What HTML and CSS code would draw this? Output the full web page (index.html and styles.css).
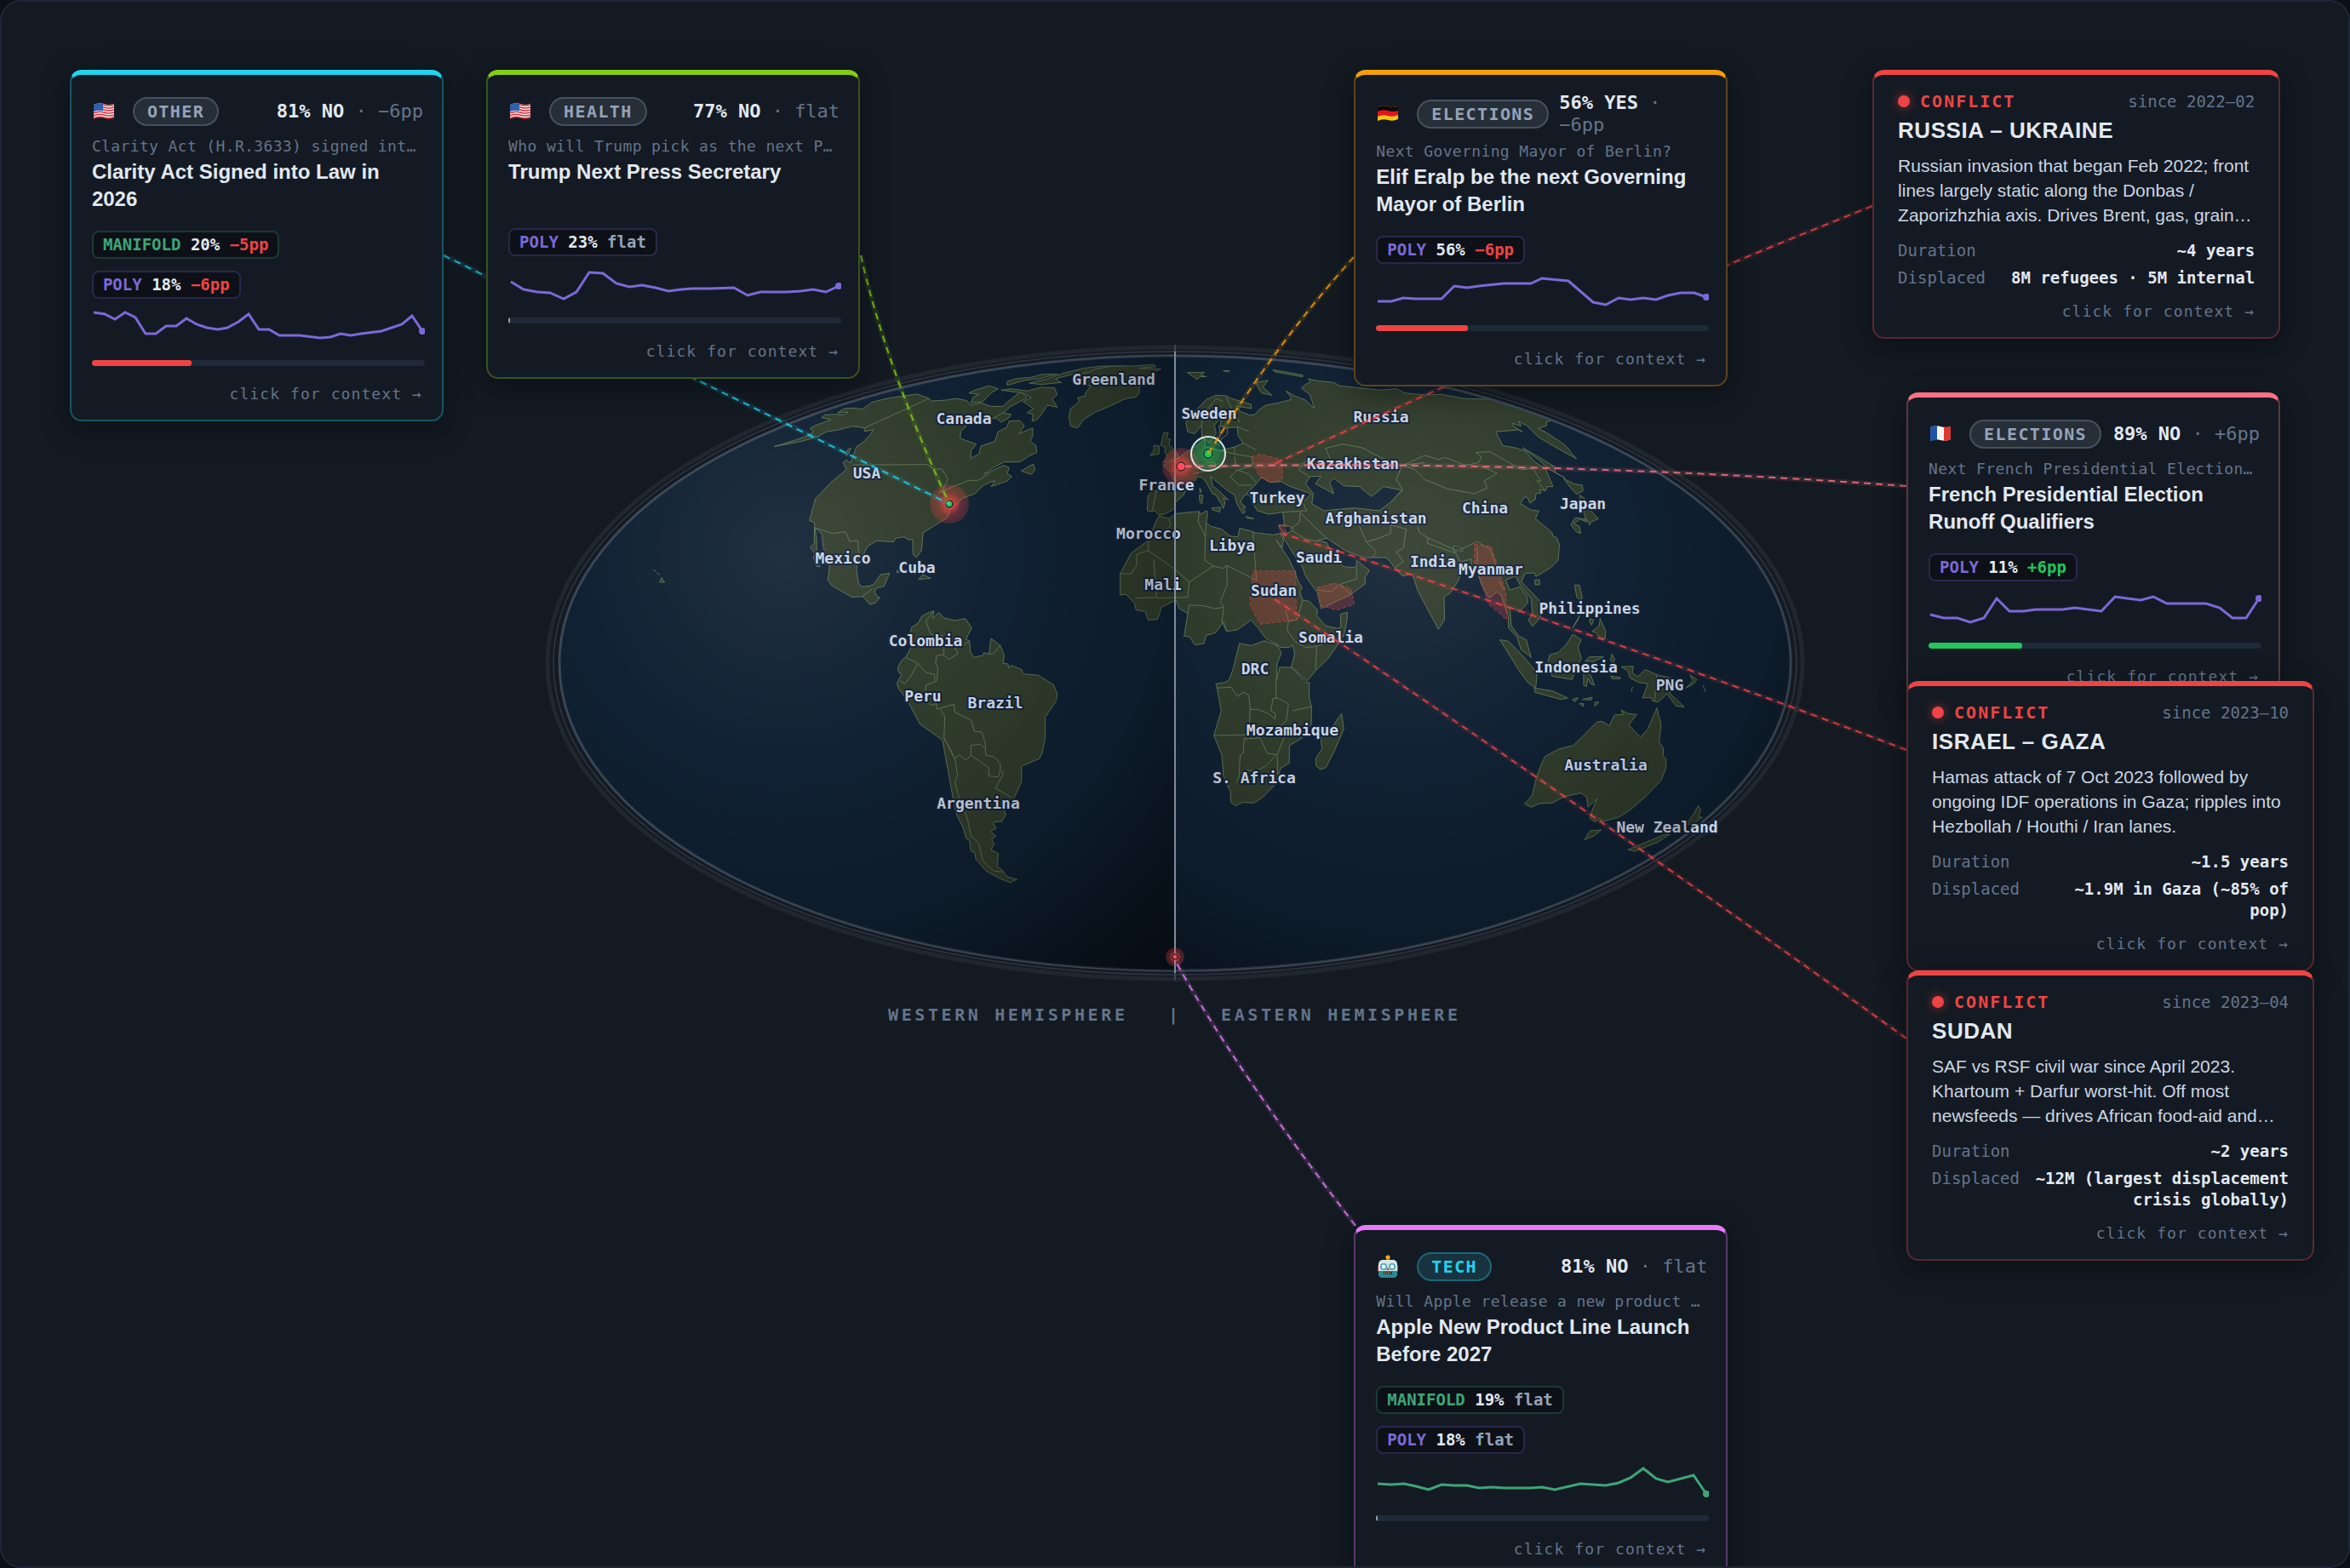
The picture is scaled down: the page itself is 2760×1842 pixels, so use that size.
FILE: index.html
```html
<!DOCTYPE html>
<html lang="en">
<head>
    <meta charset="UTF-8">
    <meta name="viewport" content="width=device-width, initial-scale=1.0">
    <title>World Markets Map</title>
    <link rel="stylesheet" href="styles.css">
</head>
<body>

    <main class="stage">

        <!-- World map -->
        <svg class="map" viewBox="2 2 2756 1838" role="img" aria-label="World map with market and conflict locations">
            <defs>
                <clipPath id="globeClip"><ellipse cx="1380" cy="779" rx="723" ry="361"/></clipPath>
                <radialGradient id="shadeWest" gradientUnits="userSpaceOnUse" cx="923" cy="647" r="640">
                    <stop offset="0" stop-color="#fff" stop-opacity="0.07"/>
                    <stop offset="0.4" stop-color="#fff" stop-opacity="0"/>
                    <stop offset="0.41" stop-color="#000" stop-opacity="0"/>
                    <stop offset="0.7" stop-color="#000" stop-opacity="0.18"/>
                    <stop offset="1" stop-color="#000" stop-opacity="0.6"/>
                </radialGradient>
                <radialGradient id="shadeEast" gradientUnits="userSpaceOnUse" cx="1646" cy="647" r="640">
                    <stop offset="0" stop-color="#fff" stop-opacity="0.07"/>
                    <stop offset="0.4" stop-color="#fff" stop-opacity="0"/>
                    <stop offset="0.41" stop-color="#000" stop-opacity="0"/>
                    <stop offset="0.7" stop-color="#000" stop-opacity="0.18"/>
                    <stop offset="1" stop-color="#000" stop-opacity="0.6"/>
                </radialGradient>
                <radialGradient id="hotRed">
                    <stop offset="0" stop-color="#ef4444" stop-opacity="0.9"/>
                    <stop offset="0.5" stop-color="#ef4444" stop-opacity="0.5"/>
                    <stop offset="0.55" stop-color="#ef4444" stop-opacity="0.36"/>
                    <stop offset="1" stop-color="#ef4444" stop-opacity="0.22"/>
                </radialGradient>
                <radialGradient id="hotGreen">
                    <stop offset="0" stop-color="#22c55e" stop-opacity="0.6"/>
                    <stop offset="1" stop-color="#22c55e" stop-opacity="0.2"/>
                </radialGradient>
            </defs>

            <ellipse class="ocean" cx="1380" cy="779" rx="723" ry="361"/>

            <g clip-path="url(#globeClip)">
                <!-- Americas -->
                <g transform="translate(640 390) scale(0.472 0.3333)">
                    <path class="land" d="M570,404 L610,387 655,366 668,352 660,340 672,330 695,318 712,308 688,302 696,292 722,290 745,292 754,282 728,285 745,270 765,268 790,272 815,247 855,233 925,219 955,233 962,243 1000,240 1022,234 1050,242 1060,258 1085,250 1110,262 1140,262 1150,248 1170,225 1185,210 1200,232 1160,262 1135,292 1120,305 1090,310 1050,330 1035,350 1033,375 1073,395 1060,420 1060,445 1080,430 1085,402 1120,385 1127,352 1150,335 1155,314 1182,313 1193,330 1180,358 1214,338 1214,365 1207,385 1222,400 1224,425 1205,437 1182,458 1142,458 1120,475 1092,500 1105,495 1140,470 1155,478 1150,500 1162,510 1150,525 1110,545 1120,525 1110,528 1092,540 1070,570 1040,585 1020,615 1008,628 1001,655 970,682 941,708 937,770 925,795 916,785 915,730 905,733 893,722 872,727 868,740 825,736 803,755 793,783 780,795 775,835 780,885 788,898 808,895 818,890 835,855 858,850 843,897 826,902 820,915 828,935 834,935 822,955 808,960 798,943 790,932 765,935 740,915 715,895 704,875 708,830 700,790 692,755 690,715 680,700 672,690 676,730 676,790 684,828 676,826 668,795 672,780 660,760 670,745 671,672 658,665 673,588 712,530 750,485 742,460 750,450 760,462 766,440 775,405 795,385 810,360 817,345 795,350 795,338 765,332 730,345 700,352 680,368 640,385Z"/>
                    <path class="land" d="M1055,215 L1070,205 1105,190 1128,200 1110,215 1090,245 1060,250 1065,230 1080,220Z M1135,205 L1160,200 1200,208 1235,195 1268,197 1275,222 1262,235 1275,265 1250,258 1238,285 1225,308 1212,315 1215,290 1200,285 1215,270 1190,245 1210,232 1190,215Z M1150,175 L1170,165 1210,160 1235,150 1275,148 1230,165 1195,170 1150,188Z M1205,180 L1250,165 1290,145 1340,128 1385,120 1440,120 1400,128 1370,135 1350,150 1310,150 1270,165 1285,178 1235,185Z M1120,300 L1140,285 1160,290 1155,302 1135,318Z M1185,490 L1215,465 1220,485 1210,502Z M748,430 L755,412 762,410 752,434Z M810,222 L832,218 828,222Z"/>
                    <path class="land" d="M1355,142 L1370,130 1415,120 1465,120 1515,115 1520,122 1480,128 1533,130 1518,140 1510,155 1480,190 1478,215 1470,230 1445,235 1400,265 1368,283 1340,310 1326,338 1308,332 1304,300 1308,270 1330,245 1325,232 1345,225 1345,215 1358,190 1320,180 1330,160 1325,150Z"/>
                    <path class="land" d="M930,872 L940,855 960,868Z M876,840 L884,846 876,848Z M270,838 L276,844 M278,848 L286,856 M286,882 L290,866 298,882Z"/>
                    <path class="land" d="M968,983 L948,993 937,1003 930,1025 913,1040 908,1065 912,1110 898,1145 886,1160 878,1185 880,1200 888,1207 880,1225 876,1240 880,1258 890,1275 910,1320 933,1382 989,1438 1005,1560 1020,1680 1024,1700 1040,1745 1048,1785 1056,1790 1060,1830 1070,1835 1072,1858 1098,1900 1130,1925 1160,1942 1165,1935 1175,1930 1150,1920 1140,1900 1126,1883 1128,1838 1110,1825 1118,1805 1112,1790 1122,1777 1108,1760 1122,1750 1115,1728 1137,1725 1147,1700 1140,1680 1160,1668 1168,1640 1186,1585 1186,1530 1230,1504 1237,1485 1245,1430 1245,1358 1272,1300 1275,1275 1265,1243 1228,1210 1190,1205 1186,1190 1160,1175 1155,1185 1152,1170 1140,1168 1143,1140 1133,1105 1110,1080 1105,1135 1092,1130 1090,1140 1067,1147 1058,1125 1057,1090 1048,1082 1062,1043 1046,1010 1020,1017 993,1008 980,988 965,1010Z"/>
                    <path class="border" d="M795,338 L955,235 M765,469 L950,467 968,483 987,483 1003,518 990,555 980,566 1055,523 1078,523 1105,500 M672,690 L715,710 748,704 758,738 778,735 782,785 M790,932 L815,905 M966,985 L948,1020 960,1065 990,1070 993,1115 992,1138 975,1140 972,1165 978,1185 975,1230 948,1245 945,1290 960,1315 975,1310 975,1330 1018,1312 1020,1340 1062,1370 1068,1407 1087,1410 1095,1445 1097,1492 1117,1497 1133,1520 1133,1545 1128,1568 1105,1565 1104,1535 1060,1492 1048,1508 1030,1490 1020,1505 993,1430 995,1355 984,1330 M898,1147 L928,1168 948,1200 970,1207 970,1230 M928,1168 L910,1215 895,1240 884,1230 M1060,1492 L1060,1457 1083,1453 1097,1470 M992,1430 L1003,1455 1020,1505 1027,1560 1020,1585 1027,1625 1052,1720 1060,1775 1080,1805 1090,1865 1117,1900 1140,1903 M1137,1545 L1140,1560 1121,1608 1160,1640 M992,1138 L1005,1155 1028,1133 1020,1115 1045,1100 1057,1090 M1105,1135 L1115,1135 1133,1105"/>
                </g>

                <!-- Europe, Africa, Asia, Oceania -->
                <g transform="translate(1300 400) scale(0.3333)">
                    <path class="land" d="M160,530 L145,548 142,600 160,604 168,600 183,614 205,612 240,592 242,570 270,545 285,510 305,500 320,480 335,482 350,500 372,540 385,545 405,580 410,592 417,570 410,555 428,562 395,530 373,512 365,478 380,492 420,525 450,545 458,575 478,610 488,605 480,590 490,588 470,570 485,545 505,540 515,575 530,600 570,612 620,605 625,640 620,655 632,660 618,680 625,700 650,740 690,800 700,830 742,890 755,945 860,895 910,858 910,835 925,810 880,775 880,795 870,800 835,797 800,770 775,712 742,705 775,697 840,740 905,765 985,765 1040,830 1077,823 1095,880 1168,1018 1190,985 1188,905 1210,890 1242,840 1245,800 1275,790 1300,800 1320,860 1345,905 1355,903 1375,885 1390,900 1400,930 1415,975 1415,1012 1445,1045 1460,1090 1495,1117 1478,1055 1450,1040 1425,1005 1420,940 1455,955 1483,925 1482,905 1455,868 1420,880 1405,845 1440,830 1455,860 1495,910 1500,965 1485,985 1500,1008 1528,975 1523,915 1460,850 1475,820 1508,820 1512,832 1565,800 1590,775 1595,720 1585,695 1570,688 1570,678 1510,628 1522,600 1495,598 1457,575 1472,550 1485,557 1490,573 1510,560 1512,540 1530,538 1525,525 1545,530 1552,515 1572,515 1545,450 1510,430 1475,390 1445,380 1395,370 1370,322 1450,315 1465,322 1430,300 1428,292 1460,302 1450,285 1480,300 1520,340 1570,370 1655,417 1635,395 1630,385 1610,365 1580,345 1550,325 1520,310 1550,300 1548,288 1600,270 1500,240 1420,215 1340,207 1260,205 1180,190 1120,192 1050,185 1020,170 960,175 870,165 820,160 800,148 740,142 710,135 718,147 700,155 685,168 715,190 732,240 700,210 660,195 632,178 645,195 650,208 605,220 560,228 535,245 520,262 500,262 470,250 460,232 510,240 508,225 440,205 420,195 385,193 350,208 320,240 278,288 285,322 310,328 333,300 335,345 365,362 385,325 378,300 402,270 400,310 460,305 462,335 480,362 450,375 400,388 370,380 345,375 345,345 322,368 300,380 250,415 200,440 225,465 240,500 222,525Z"/>
                    <path class="sea" d="M520,512 L545,482 575,500 615,497 640,512 720,540 695,565 640,560 600,540 540,540 512,555 492,538Z M715,480 L700,505 728,540 722,575 765,600 870,590 960,600 1000,570 1042,528 975,515 932,550 890,515 835,512 800,485 785,500 800,540 735,505 755,478Z M1220,725 L1245,728 1255,742 1222,740Z M605,652 L645,655 660,665 645,675 625,680Z M395,300 L425,308 425,330 405,345 395,370 385,365 400,330Z"/>
                    <path class="land" d="M183,618 L176,632 145,705 85,750 47,822 47,897 67,895 97,925 103,950 135,955 145,985 178,983 193,940 243,915 255,945 285,962 272,1042 292,1045 310,1073 342,1068 350,1040 383,1030 412,990 422,1025 460,1020 508,985 530,1010 560,1050 600,1072 612,1082 640,1082 655,1075 662,1105 650,1150 705,1200 735,1165 780,1120 815,1070 835,1040 846,985 848,958 823,965 825,1010 812,1015 770,1005 740,970 742,950 715,920 690,915 680,885 688,872 672,845 662,812 640,768 596,702 618,730 622,705 612,680 585,685 520,677 510,672 468,662 462,692 435,690 405,665 365,655 350,640 355,615 352,600 330,612 325,602 245,610 218,627Z"/>
                    <path class="land" d="M467,1068 L510,1075 555,1058 600,1075 615,1100 600,1140 597,1200 609,1152 650,1152 700,1205 713,1205 713,1260 721,1290 721,1350 690,1400 643,1428 643,1490 612,1508 604,1535 588,1570 549,1610 517,1630 478,1628 455,1640 436,1628 436,1590 423,1565 411,1535 405,1460 377,1392 403,1305 388,1225 384,1210 416,1205 431,1195 444,1160Z M827,1315 L835,1370 800,1450 772,1505 753,1512 737,1500 737,1470 758,1440 753,1395 792,1365Z"/>
                    <path class="land" d="M200,325 L216,326 210,345 224,348 218,365 250,400 252,415 200,430 215,410 205,395 205,375 190,370 195,345Z M165,370 L185,372 183,400 152,405 165,390Z M283,113 L345,112 330,122 350,127 328,128 318,137Z M410,106 L432,107 425,111Z M525,148 L568,140 550,165 582,193 545,185 532,165Z M585,103 L690,122 690,128 590,110Z M490,620 L518,628 495,627Z M370,590 L400,588 398,605 372,597Z M325,545 L338,545 335,575 328,570Z M327,520 L334,530 328,538Z"/>
                    <path class="land" d="M1465,378 L1520,410 1578,445 1580,465 1615,485 1560,455 1520,420Z M1610,487 L1645,505 1675,510 1678,530 1655,542 1635,520Z M1665,545 L1682,555 1690,580 1710,605 1732,628 1705,640 1702,650 1690,630 1650,625 1635,650 1655,675 1670,680 1665,655 1645,645 1668,630 1690,640Z M1507,845 L1523,842 1526,860 1510,862Z M1648,862 L1665,862 1675,905 1670,915 1656,905Z M1665,970 L1642,1012 1660,985Z M1703,980 L1715,985 1708,1003 1700,990Z M1710,1025 L1735,1005 1738,980 1758,1025 1755,1052 1735,1045 1725,1030Z M1560,1108 L1590,1100 1620,1070 1642,1035 1672,1055 1660,1080 1672,1122 1655,1150 1640,1195 1568,1183 1555,1130Z M1385,1055 L1415,1060 1460,1105 1490,1140 1515,1170 1514,1195 1511,1225 1483,1205 1450,1160 1410,1095Z M1506,1225 L1569,1235 1624,1260 1600,1265 1508,1240Z M1640,1265 l20,-6 -10,14Z M1676,1265 l34,-8 -3,10Z M1720,1275 l14,0 -15,14Z M1665,1280 l14,0 0,10Z M1685,1130 L1700,1115 1750,1115 1715,1132Z M1680,1175 L1695,1172 1705,1180 1718,1215 1705,1210 1695,1190 1690,1220 1680,1215Z M1780,1105 L1790,1125 1782,1140 1775,1125Z M1775,1183 L1810,1188 1808,1193 1780,1192Z"/>
                    <path class="land" d="M1812,1150 L1856,1148 1851,1170 1870,1185 1898,1160 1938,1178 1990,1190 1985,1245 2035,1292 2005,1288 1974,1245 1942,1275 1922,1270 1917,1258 1888,1260 1906,1210 1875,1205 1844,1190 1836,1165Z M2055,1178 L2079,1195 2068,1210 2040,1225 2065,1200Z M2100,1215 L2110,1238 M1852,1220 L1848,1238 M1812,1302 L1836,1315 1867,1318 1839,1355 1880,1398 1906,1370 1938,1295 1953,1355 1946,1415 1961,1437 1961,1465 1971,1475 1969,1510 1953,1550 1906,1600 1844,1655 1804,1680 1749,1695 1734,1685 1721,1697 1702,1685 1710,1655 1728,1615 1695,1645 1691,1610 1671,1595 1613,1607 1569,1630 1522,1632 1495,1645 1472,1633 1498,1605 1514,1540 1530,1495 1545,1465 1593,1440 1644,1427 1687,1385 1726,1345 1745,1342 1770,1358 1789,1320 1820,1318Z M1702,1728 L1742,1725 1718,1745 1683,1760Z M2084,1640 L2093,1655 2084,1680 2099,1680 2071,1700 2040,1708 2065,1672Z M1985,1740 L1938,1770 1859,1800 1836,1795 1883,1775 1961,1743Z"/>
                    <path class="border" d="M218,627 L225,655 148,700 145,740 245,810 290,852 375,795 345,775 347,690 322,640 325,602 M350,640 L347,690 M375,795 L410,803 422,793 527,845 515,672 M145,740 L105,755 105,792 85,822 47,822 M165,770 L175,905 100,908 M290,852 L285,905 175,908 M422,793 L424,860 400,920 412,940 380,945 340,935 290,932 285,962 M412,940 L405,990 422,1025 M670,985 L640,990 635,1020 662,1060 700,1082 740,1078 835,1040 M630,950 L640,990 M690,915 L670,985 M740,1078 L735,1160"/>
                    <path class="border" d="M388,1225 L438,1222 460,1255 480,1240 500,1250 505,1300 532,1300 570,1315 592,1335 595,1315 578,1305 585,1262 600,1260 640,1280 632,1340 600,1370 M505,1300 L500,1390 377,1392 M500,1390 L484,1405 480,1455 470,1460 465,1540 455,1560 M484,1405 L540,1400 565,1455 600,1460 624,1400 M595,1462 L560,1500 530,1515 495,1515 470,1525 M600,1460 L602,1530 M597,1262 L595,1200 M655,1305 L721,1290 M1938,1178 L1930,1272"/>
                    <path class="border" d="M675,455 L700,425 790,425 770,380 830,365 900,378 960,410 1040,440 1120,430 M675,455 L715,480 M1040,440 L1020,490 1042,525 1000,570 M1045,440 L1120,405 1170,420 1190,412 1265,440 1310,430 1320,410 1300,395 1350,392 1460,455 1500,450 1530,495 1515,495 1545,530 M1045,440 L1085,455 1120,490 1200,523 1295,540 1340,520 1330,495 1375,468 1310,440 M1095,655 L1100,675 1130,695 1220,735 1250,735 1305,708 1330,725 1350,735 1370,790 1385,820 1440,820 M1130,695 L1130,715 1230,750 1220,735 M1230,750 L1245,780 1285,770 1285,790 M1305,725 L1305,790 M1380,845 L1400,880 M1000,650 L1055,665 1045,730 1020,745 1045,780 1015,800 M890,655 L915,710 950,700 1000,680 1000,650 M915,710 L950,745 935,765 M680,605 L730,655 775,697 M620,605 L705,600 690,570 M680,605 L680,640 645,665 700,700 742,708 M742,880 L790,885 820,860 880,840 880,800 M820,860 L860,895"/>
                    <path class="border" d="M450,375 L450,400 510,410 515,440 455,460 435,480 465,510 510,510 M450,410 L455,440 385,450 305,470 M400,388 L450,400 M455,455 L500,470 525,500 M385,450 L380,430 355,430 M420,200 L440,240 470,290 M333,300 L340,260 385,205 410,215 M175,530 L160,600 M225,460 L250,455 M460,305 L500,320 M480,362 L525,385"/>

                    <!-- Conflict zones -->
                    <path class="zone" d="M511,410 L537,400 617,420 620,480 612,495 575,500 545,485 530,465Z M605,650 L632,650 628,690 615,690Z M515,812 L665,812 668,985 540,1000 503,930Z M742,870 L800,855 860,875 872,930 810,950 755,935Z M1295,718 L1355,725 1375,790 1405,885 1410,985 1345,930 1315,840 1295,790Z"/>
                </g>
            </g>

            <ellipse class="rim" cx="1380" cy="779" rx="723" ry="361"/>
            <ellipse class="rim rim-thin" cx="1380" cy="779" rx="730" ry="366"/>
            <ellipse class="rim rim-wide" cx="1380" cy="779" rx="737" ry="371"/>

            <g class="labels">
                <text x="1308" y="452">Greenland</text>
                <text x="1132" y="498">Canada</text>
                <text x="1018" y="562">USA</text>
                <text x="990" y="662">Mexico</text>
                <text x="1077" y="673">Cuba</text>
                <text x="1087" y="759">Colombia</text>
                <text x="1084" y="824">Peru</text>
                <text x="1169" y="832">Brazil</text>
                <text x="1149" y="950">Argentina</text>
                <text x="1420" y="492">Sweden</text>
                <text x="1370" y="576">France</text>
                <text x="1349" y="633">Morocco</text>
                <text x="1366" y="693">Mali</text>
                <text x="1447" y="647">Libya</text>
                <text x="1500" y="591">Turkey</text>
                <text x="1589" y="551">Kazakhstan</text>
                <text x="1622" y="496">Russia</text>
                <text x="1616" y="615">Afghanistan</text>
                <text x="1549" y="661">Saudi</text>
                <text x="1496" y="700">Sudan</text>
                <text x="1563" y="755">Somalia</text>
                <text x="1683" y="666">India</text>
                <text x="1474" y="792">DRC</text>
                <text x="1744" y="603">China</text>
                <text x="1859" y="598">Japan</text>
                <text x="1751" y="675">Myanmar</text>
                <text x="1867" y="721">Philippines</text>
                <text x="1851" y="790">Indonesia</text>
                <text x="1961" y="811">PNG</text>
                <text x="1518" y="864">Mozambique</text>
                <text x="1886" y="905">Australia</text>
                <text x="1473" y="920">S. Africa</text>
                <text x="1958" y="978">New Zealand</text>
            </g>

            <!-- Hemisphere shading -->
            <g clip-path="url(#globeClip)">
                <rect x="657" y="418" width="723" height="722" fill="url(#shadeWest)"/>
                <rect x="1380" y="418" width="723" height="722" fill="url(#shadeEast)"/>
            </g>

            <line class="meridian-soft" x1="1380" y1="405" x2="1380" y2="1152"/>
            <line class="meridian" x1="1380" y1="413" x2="1380" y2="1143"/>

            <!-- Markers -->
            <circle cx="1115" cy="592" r="23" fill="url(#hotRed)"/>
            <circle class="dot dot-up" cx="1115" cy="592" r="4"/>
            <circle cx="1387" cy="548" r="22" fill="url(#hotRed)"/>
            <circle class="dot" cx="1387" cy="548" r="5"/>
            <circle class="ring" cx="1419" cy="533" r="20" fill="url(#hotGreen)"/>
            <circle class="dot dot-up" cx="1419" cy="533" r="5"/>
            <circle cx="1380" cy="1124" r="11" fill="url(#hotRed)"/>
            <circle class="dot" cx="1380" cy="1124" r="3"/>

            <!-- Connectors -->
            <g class="link link-cyan"><path d="M521,300 L1115,592"/><path class="dash" d="M521,300 L1115,592"/></g>
            <g class="link link-lime"><path d="M1011,300 Q1040,430 1115,592"/><path class="dash" d="M1011,300 Q1040,430 1115,592"/></g>
            <g class="link link-amber"><path d="M1590,302 Q1500,402 1419,533"/><path class="dash" d="M1590,302 Q1500,402 1419,533"/></g>
            <g class="link link-red"><path d="M2199,242 Q1846,383 1492,547"/><path class="dash" d="M2199,242 Q1846,383 1492,547"/></g>
            <g class="link link-rose"><path d="M2239,571 Q1813,540 1387,548"/><path class="dash" d="M2239,571 Q1813,540 1387,548"/></g>
            <g class="link link-red"><path d="M2239,881 Q1873,742 1507,627"/><path class="dash" d="M2239,881 Q1873,742 1507,627"/></g>
            <g class="link link-red"><path d="M2239,1220 Q1868,952 1497,704"/><path class="dash" d="M2239,1220 Q1868,952 1497,704"/></g>
            <g class="link link-fuchsia"><path d="M1592,1440 Q1450,1255 1380,1128"/><path class="dash" d="M1592,1440 Q1450,1255 1380,1128"/></g>

            <g class="hemisphere">
                <text x="1043" y="1199">WESTERN HEMISPHERE</text>
                <text x="1372" y="1199">|</text>
                <text x="1434" y="1199">EASTERN HEMISPHERE</text>
            </g>
        </svg>

        <!-- Market cards -->
        <article class="card cyan at-clarity">
            <header class="card-head">
                <svg class="flag" viewBox="0 0 36 28" aria-label="United States">
                    <path fill="#f3f0f0" d="M2,6 Q8,3 14,5 T26,5 V20 Q20,23 14,21 T2,22Z"/>
                    <path fill="none" stroke="#d8323e" stroke-width="1.4" d="M2,7 Q8,4 14,6 T26,6 M2,10 Q8,7 14,9 T26,9 M2,13 Q8,10 14,12 T26,12 M2,16 Q8,13 14,15 T26,15 M2,19 Q8,16 14,18 T26,18 M2,22 Q8,19 14,21 T26,21"/>
                    <path fill="#2f5fae" d="M2,6 Q8,3 13,5 V13 Q8,12 2,14Z"/>
                </svg>
                <span class="tag">OTHER</span>
                <span class="odds"><b>81% NO</b> · −6pp</span>
            </header>
            <p class="question">Clarity Act (H.R.3633) signed into law in 2026?</p>
            <h2>Clarity Act Signed into Law in 2026</h2>
            <div class="chips">
                <span class="chip manifold">MANIFOLD <b>20%</b> <i class="down">−5pp</i></span>
                <span class="chip poly">POLY <b>18%</b> <i class="down">−6pp</i></span>
            </div>
            <svg class="spark poly-line" viewBox="0 0 391 48"><polyline points="2,8 15,10 27,16 39,8 51,14 63,33 75,33 87,24 99,24 111,15 123,22 135,26 148,28 159,26 172,19 184,10 196,28 208,28 220,35 244,35 268,38 280,37 292,33 304,35 316,33 340,30 364,22 376,12 388,30"/><circle cx="388" cy="30" r="4"/></svg>
            <div class="bar"><div class="bar-fill down-fill" style="width: 30%"></div></div>
            <a class="hint" href="#clarity">click for context →</a>
        </article>

        <article class="card lime at-press">
            <header class="card-head">
                <svg class="flag" viewBox="0 0 36 28" aria-label="United States">
                    <path fill="#f3f0f0" d="M2,6 Q8,3 14,5 T26,5 V20 Q20,23 14,21 T2,22Z"/>
                    <path fill="none" stroke="#d8323e" stroke-width="1.4" d="M2,7 Q8,4 14,6 T26,6 M2,10 Q8,7 14,9 T26,9 M2,13 Q8,10 14,12 T26,12 M2,16 Q8,13 14,15 T26,15 M2,19 Q8,16 14,18 T26,18 M2,22 Q8,19 14,21 T26,21"/>
                    <path fill="#2f5fae" d="M2,6 Q8,3 13,5 V13 Q8,12 2,14Z"/>
                </svg>
                <span class="tag">HEALTH</span>
                <span class="odds"><b>77% NO</b> · flat</span>
            </header>
            <p class="question">Who will Trump pick as the next Press Secretary?</p>
            <h2>Trump Next Press Secretary</h2>
            <div class="chips">
                <span class="chip poly">POLY <b>23%</b> <i class="flat">flat</i></span>
            </div>
            <svg class="spark poly-line" viewBox="0 0 391 48"><polyline points="3,22 18,31 34,34 49,35 65,42 80,34 95,11 111,12 127,24 142,28 157,26 173,29 188,33 203,31 216,30 236,30 265,29 281,38 296,34 327,34 343,33 358,31 373,34 388,27"/><circle cx="388" cy="27" r="4"/></svg>
            <div class="bar"><div class="bar-fill flat-fill" style="width: 2px"></div></div>
            <a class="hint" href="#press">click for context →</a>
        </article>

        <article class="card amber at-berlin">
            <header class="card-head">
                <svg class="flag" viewBox="0 0 36 28" aria-label="Germany">
                    <path fill="#f5c518" d="M2,6 Q8,3 14,5 T26,5 V20 Q20,23 14,21 T2,22Z"/>
                    <path fill="#e3131b" d="M2,6 Q8,3 14,5 T26,5 V15 Q20,18 14,16 T2,17Z"/>
                    <path fill="#0b0b0b" d="M2,6 Q8,3 14,5 T26,5 V10 Q20,12 14,10 T2,11Z"/>
                </svg>
                <span class="tag">ELECTIONS</span>
                <span class="odds"><b>56% YES</b> · −6pp</span>
            </header>
            <p class="question">Next Governing Mayor of Berlin?</p>
            <h2>Elif Eralp be the next Governing Mayor of Berlin</h2>
            <div class="chips">
                <span class="chip poly">POLY <b>56%</b> <i class="down">−6pp</i></span>
            </div>
            <svg class="spark poly-line" viewBox="0 0 391 48"><polyline points="2,36 18,36 32,32 47,33 77,33 92,18 107,20 121,18 150,15 182,15 195,9 226,12 255,37 270,40 285,32 299,34 314,32 329,34 343,29 358,26 374,26 388,31"/><circle cx="388" cy="31" r="4"/></svg>
            <div class="bar"><div class="bar-fill down-fill" style="width: 27.5%"></div></div>
            <a class="hint" href="#berlin">click for context →</a>
        </article>

        <article class="card rose at-france">
            <header class="card-head">
                <svg class="flag" viewBox="0 0 36 28" aria-label="France">
                    <path fill="#f4f4f4" d="M2,6 Q8,3 14,5 T26,5 V20 Q20,23 14,21 T2,22Z"/>
                    <path fill="#1f55a5" d="M2,6 Q6,4 10,4 V21 Q6,21 2,22Z"/>
                    <path fill="#e0392f" d="M18,5 Q22,6 26,5 V20 Q22,22 18,22Z"/>
                </svg>
                <span class="tag">ELECTIONS</span>
                <span class="odds"><b>89% NO</b> · +6pp</span>
            </header>
            <p class="question">Next French Presidential Election: who advances?</p>
            <h2>French Presidential Election Runoff Qualifiers</h2>
            <div class="chips">
                <span class="chip poly">POLY <b>11%</b> <i class="up">+6pp</i></span>
            </div>
            <svg class="spark poly-line" viewBox="0 0 391 48"><polyline points="2,31 18,35 34,35 49,40 65,35 80,12 95,27 111,27 126,25 157,25 172,23 203,27 219,10 249,14 264,10 280,18 326,18 342,23 357,35 373,35 388,12"/><circle cx="388" cy="12" r="4"/></svg>
            <div class="bar"><div class="bar-fill up-fill" style="width: 28.2%"></div></div>
            <a class="hint" href="#france">click for context →</a>
        </article>

        <article class="card fuchsia at-apple">
            <header class="card-head">
                <svg class="flag" viewBox="0 0 36 28" aria-label="Robot">
                    <rect x="13" y="3" width="3" height="4" fill="#7b4bb0"/>
                    <circle cx="14" cy="3" r="2.6" fill="#f5a623"/>
                    <rect x="2" y="12" width="3" height="8" rx="1" fill="#d8323e"/>
                    <rect x="23" y="12" width="3" height="8" rx="1" fill="#d8323e"/>
                    <rect x="3" y="6" width="22" height="21" rx="5" fill="#d5e7e9"/>
                    <path fill="#2a8791" d="M3,19 H25 V22 Q25,27 20,27 H8 Q3,27 3,22Z"/>
                    <circle cx="9" cy="14" r="4" fill="#3ba5b8"/><circle cx="19" cy="14" r="4" fill="#3ba5b8"/>
                    <circle cx="9" cy="14" r="2.4" fill="#fff"/><circle cx="19" cy="14" r="2.4" fill="#fff"/>
                    <path fill="#e0392f" d="M14,15 l2,3 h-4Z"/>
                    <rect x="9" y="20" width="10" height="3" rx="1" fill="#3a2a24"/>
                    <path stroke="#e9e2d0" stroke-dasharray="1 1" d="M10,21.5 H18"/>
                </svg>
                <span class="tag tag-tech">TECH</span>
                <span class="odds"><b>81% NO</b> · flat</span>
            </header>
            <p class="question">Will Apple release a new product line before 2027?</p>
            <h2>Apple New Product Line Launch Before 2027</h2>
            <div class="chips">
                <span class="chip manifold">MANIFOLD <b>19%</b> <i class="flat">flat</i></span>
                <span class="chip poly">POLY <b>18%</b> <i class="flat">flat</i></span>
            </div>
            <svg class="spark manifold-line" viewBox="0 0 391 48"><polyline points="2,27 18,28 33,27 47,30 62,34 77,28 91,29 107,29 121,32 137,31 151,32 182,32 195,31 210,34 240,27 270,29 285,26 299,20 314,9 329,21 343,25 358,21 373,17 388,39"/><circle cx="388" cy="39" r="4"/></svg>
            <div class="bar"><div class="bar-fill flat-fill" style="width: 2px"></div></div>
            <a class="hint" href="#apple">click for context →</a>
        </article>

        <!-- Conflict cards -->
        <article class="card conflict at-ukraine">
            <header class="conflict-head">
                <span class="pulse"></span>
                <span class="kind">CONFLICT</span>
                <span class="since">since 2022–02</span>
            </header>
            <h2>RUSSIA – UKRAINE</h2>
            <p class="summary">Russian invasion that began Feb 2022; front lines largely static along the Donbas / Zaporizhzhia axis. Drives Brent, gas, grain…</p>
            <dl class="stats">
                <div><dt>Duration</dt><dd>~4 years</dd></div>
                <div><dt>Displaced</dt><dd>8M refugees · 5M internal</dd></div>
            </dl>
            <a class="hint" href="#ukraine">click for context →</a>
        </article>

        <article class="card conflict at-gaza">
            <header class="conflict-head">
                <span class="pulse"></span>
                <span class="kind">CONFLICT</span>
                <span class="since">since 2023–10</span>
            </header>
            <h2>ISRAEL – GAZA</h2>
            <p class="summary">Hamas attack of 7 Oct 2023 followed by ongoing IDF operations in Gaza; ripples into Hezbollah / Houthi / Iran lanes.</p>
            <dl class="stats">
                <div><dt>Duration</dt><dd>~1.5 years</dd></div>
                <div><dt>Displaced</dt><dd>~1.9M in Gaza (~85% of pop)</dd></div>
            </dl>
            <a class="hint" href="#gaza">click for context →</a>
        </article>

        <article class="card conflict at-sudan">
            <header class="conflict-head">
                <span class="pulse"></span>
                <span class="kind">CONFLICT</span>
                <span class="since">since 2023–04</span>
            </header>
            <h2>SUDAN</h2>
            <p class="summary">SAF vs RSF civil war since April 2023. Khartoum + Darfur worst-hit. Off most newsfeeds — drives African food-aid and…</p>
            <dl class="stats">
                <div><dt>Duration</dt><dd>~2 years</dd></div>
                <div><dt>Displaced</dt><dd>~12M (largest displacement crisis globally)</dd></div>
            </dl>
            <a class="hint" href="#sudan">click for context →</a>
        </article>

    </main>

</body>
</html>
```

FILE: styles.css
```css
* {
    box-sizing: border-box;
}
body {
    margin: 0;
    background-color: #0b0f16;
    color: #e2e8f0;
    font-family: "Liberation Sans", Arial, sans-serif;
}
h2, p, dl, dd {
    margin: 0;
}
.stage {
    position: relative;
    height: 100vh;
    overflow: hidden;
    background-color: #131a22;
    border: 2px solid #1e2736;
    border-radius: 24px;
}

/* Map */
.map {
    display: block;
    width: 100%;
    height: 100%;
    font-family: "DejaVu Sans Mono", monospace;
}
.ocean, .sea {
    fill: #102133;
}
.land {
    fill: #2f3b2b;
}
.land, .border, .sea {
    stroke: #5b7052;
    stroke-width: 1;
    vector-effect: non-scaling-stroke;
}
.border {
    fill: none;
}
.zone {
    fill: rgba(239, 68, 68, 0.25);
    stroke: rgba(239, 68, 68, 0.55);
    stroke-width: 1;
    stroke-dasharray: 4 3;
    vector-effect: non-scaling-stroke;
}
.labels text {
    fill: #cbd5e1;
    stroke: #14233a;
    stroke-width: 4px;
    paint-order: stroke;
    stroke-linejoin: round;
    font-size: 18px;
    font-weight: bold;
    text-anchor: middle;
}
.rim {
    fill: none;
    stroke: #3b4757;
    stroke-width: 3;
}
.rim-thin {
    stroke: #2a303d;
    stroke-width: 2;
}
.rim-wide {
    stroke: #20272f;
    stroke-width: 5;
}
.meridian {
    stroke: #7f8a9b;
    stroke-width: 2;
}
.meridian-soft {
    stroke: #3d4653;
    stroke-width: 2;
}
.dot {
    fill: #ff4d5a;
    stroke: #0b1017;
    stroke-width: 1;
}
.dot-up {
    fill: #22c55e;
}
.ring {
    stroke: #dde6ea;
    stroke-width: 2;
}
.link {
    fill: none;
    stroke-width: 6;
}
.link path {
    stroke-opacity: 0.13;
}
.link .dash {
    stroke-width: 2;
    stroke-opacity: 0.85;
    stroke-dasharray: 8 6;
}
.link-cyan {
    stroke: #22d3ee;
}
.link-lime {
    stroke: #84cc16;
}
.link-amber {
    stroke: #f59e0b;
}
.link-red {
    stroke: #ef4444;
}
.link-rose {
    stroke: #fb7185;
}
.link-fuchsia {
    stroke: #e879f9;
}
.hemisphere text {
    fill: #64748b;
    font-size: 20px;
    font-weight: bold;
    letter-spacing: 0.18em;
}

/* Cards */
.card {
    --accent: #ef4444;
    position: absolute;
    width: 439px;
    display: flex;
    flex-direction: column;
    padding: 20px 20px 18px 24px;
    background-color: #141a23;
    border: 2px solid color-mix(in srgb, var(--accent) 32%, #141a23);
    border-top: 6px solid var(--accent);
    border-radius: 14px;
    box-shadow: 0 8px 32px rgba(0, 0, 0, 0.4);
}
.cyan {
    --accent: #22d3ee;
}
.lime {
    --accent: #84cc16;
}
.amber {
    --accent: #f59e0b;
}
.rose {
    --accent: #fb7185;
}
.fuchsia {
    --accent: #e879f9;
}
.at-clarity {
    left: 2.9%;
    top: 4.35%;
}
.at-press {
    left: 20.65%;
    top: 4.35%;
}
.at-berlin {
    left: 57.63%;
    top: 4.35%;
}
.at-ukraine {
    right: 2.9%;
    top: 4.35%;
}
.at-france {
    right: 2.9%;
    top: 24.95%;
}
.at-gaza {
    right: 1.45%;
    top: 43.42%;
}
.at-sudan {
    right: 1.45%;
    top: 61.9%;
}
.at-apple {
    left: 57.63%;
    top: 78.2%;
}
.card-head {
    display: flex;
    align-items: center;
    gap: 12px;
    min-height: 46px;
    padding-right: 2px;
    font-family: "DejaVu Sans Mono", monospace;
}
.flag {
    width: 36px;
    height: 28px;
    flex: none;
}
.tag {
    padding: 2px 15px;
    border: 2px solid #465160;
    border-radius: 17px;
    background-color: #262e38;
    color: #94a3b8;
    font-size: 20px;
    font-weight: bold;
    line-height: 26px;
    letter-spacing: 0.07em;
}
.tag-tech {
    border-color: #1c6677;
    background-color: #18333f;
    color: #22d3ee;
}
.odds {
    margin-left: auto;
    color: #64748b;
    font-size: 22px;
    line-height: 26px;
}
.odds b {
    color: #e2e8f0;
}
.question {
    margin-top: 6px;
    padding-right: 4px;
    overflow: hidden;
    white-space: nowrap;
    text-overflow: ellipsis;
    color: #64748b;
    font-family: "DejaVu Sans Mono", monospace;
    font-size: 18px;
    line-height: 23px;
    letter-spacing: 0.02em;
}
.card h2 {
    margin-top: 3px;
    min-height: 61px;
    font-size: 24px;
    line-height: 32px;
}
.chips {
    display: flex;
    flex-wrap: wrap;
    gap: 14px;
    margin-top: 21px;
}
.chip {
    padding: 0 11px;
    border: 2px solid;
    border-radius: 8px;
    background-color: #0d1117;
    font-family: "DejaVu Sans Mono", monospace;
    font-size: 19px;
    font-weight: bold;
    line-height: 29px;
}
.chip b {
    color: #e2e8f0;
}
.chip i {
    font-style: normal;
}
.manifold {
    color: #3fa577;
    border-color: #1a3a31;
}
.poly {
    color: #7c69d8;
    border-color: #2a274a;
}
.up {
    color: #22c55e;
}
.down {
    color: #ef4444;
}
.flat {
    color: #94a3b8;
}
.spark {
    display: block;
    width: 100%;
    height: 48px;
    margin-top: 8px;
}
.spark polyline {
    fill: none;
    stroke-width: 3;
}
.poly-line {
    stroke: #7c69d8;
    fill: #7c69d8;
}
.manifold-line {
    stroke: #3fa577;
    fill: #3fa577;
}
.spark circle {
    stroke: none;
}
.bar {
    height: 7px;
    margin-top: 16px;
    overflow: hidden;
    border-radius: 3px;
    background-color: #1f2937;
}
.bar-fill {
    height: 100%;
    border-radius: 3px;
}
.up-fill {
    background-color: #22c55e;
}
.down-fill {
    background-color: #ef4444;
}
.flat-fill {
    background-color: #94a3b8;
}
.hint {
    align-self: flex-end;
    margin-top: 21px;
    padding-right: 3px;
    color: #64748b;
    font-family: "DejaVu Sans Mono", monospace;
    font-size: 18px;
    line-height: 24px;
    letter-spacing: 0.06em;
    text-decoration: none;
}

/* Conflict cards */
.conflict {
    width: 479px;
    padding: 19px 28px 18px;
}
.conflict-head {
    display: flex;
    align-items: center;
    gap: 12px;
    font-family: "DejaVu Sans Mono", monospace;
    line-height: 24px;
}
.pulse {
    width: 14px;
    height: 14px;
    border-radius: 50%;
    background-color: #ef4444;
    box-shadow: 0 0 12px rgba(239, 68, 68, 0.6);
}
.kind {
    color: #ef4444;
    font-size: 20px;
    font-weight: bold;
    letter-spacing: 0.1em;
}
.since {
    margin-left: auto;
    color: #64748b;
    font-size: 19px;
}
.conflict h2 {
    margin-top: 6px;
    min-height: 0;
    font-size: 26px;
    letter-spacing: 0.02em;
}
.summary {
    margin-top: 11px;
    color: #cbd5e1;
    font-size: 21px;
    line-height: 29px;
}
.stats {
    display: flex;
    flex-direction: column;
    gap: 7px;
    margin-top: 15px;
    font-family: "DejaVu Sans Mono", monospace;
    font-size: 19px;
    line-height: 25px;
}
.stats div {
    display: flex;
    justify-content: space-between;
    gap: 12px;
}
.stats dt {
    color: #64748b;
}
.stats dd {
    font-weight: bold;
    text-align: right;
}
.conflict .hint {
    margin-top: 15px;
    padding-right: 0;
}
```
